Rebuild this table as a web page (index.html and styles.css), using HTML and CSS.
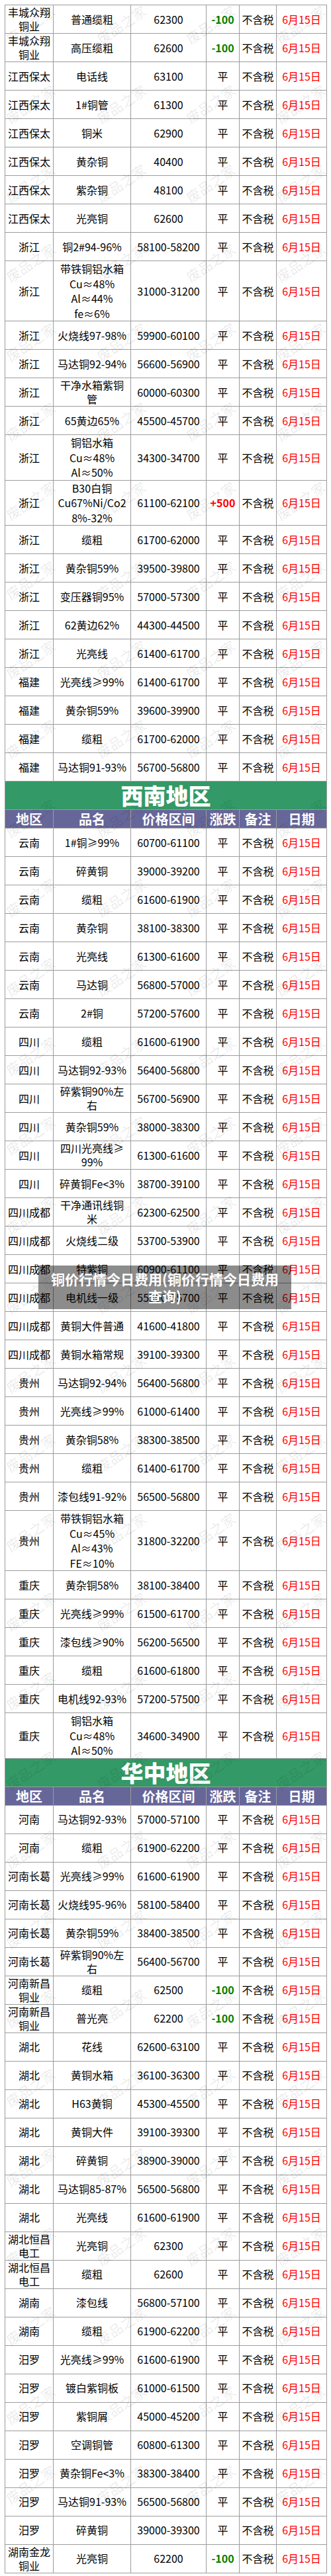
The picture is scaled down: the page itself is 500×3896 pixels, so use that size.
FILE: index.html
```html
<!DOCTYPE html>
<html lang="zh-CN">
<head>
<meta charset="utf-8">
<title>铜价行情今日费用</title>
<link rel="stylesheet" href="styles.css">
</head>
<body>
<div class="page">
<table class="price-table">
<colgroup><col class="c-area"><col class="c-name"><col class="c-price"><col class="c-chg"><col class="c-note"><col class="c-date"></colgroup>
<tbody>
<tr><td class="two">丰城众翔<br>铜业</td><td>普通缆粗</td><td>62300</td><td class="dn">-100</td><td>不含税</td><td class="dt">6月15日</td></tr>
<tr><td class="two">丰城众翔<br>铜业</td><td>高压缆粗</td><td>62600</td><td class="dn">-100</td><td>不含税</td><td class="dt">6月15日</td></tr>
<tr><td>江西保太</td><td>电话线</td><td>63100</td><td>平</td><td>不含税</td><td class="dt">6月15日</td></tr>
<tr><td>江西保太</td><td>1#铜管</td><td>61300</td><td>平</td><td>不含税</td><td class="dt">6月15日</td></tr>
<tr><td>江西保太</td><td>铜米</td><td>62900</td><td>平</td><td>不含税</td><td class="dt">6月15日</td></tr>
<tr><td>江西保太</td><td>黄杂铜</td><td>40400</td><td>平</td><td>不含税</td><td class="dt">6月15日</td></tr>
<tr><td>江西保太</td><td>紫杂铜</td><td>48100</td><td>平</td><td>不含税</td><td class="dt">6月15日</td></tr>
<tr><td>江西保太</td><td>光亮铜</td><td>62600</td><td>平</td><td>不含税</td><td class="dt">6月15日</td></tr>
<tr><td>浙江</td><td>铜2#94-96%</td><td>58100-58200</td><td>平</td><td>不含税</td><td class="dt">6月15日</td></tr>
<tr><td>浙江</td><td>带铁铜铝水箱<br>Cu≈48%<br>Al≈44%<br>fe≈6%</td><td>31000-31200</td><td>平</td><td>不含税</td><td class="dt">6月15日</td></tr>
<tr><td>浙江</td><td>火烧线97-98%</td><td>59900-60100</td><td>平</td><td>不含税</td><td class="dt">6月15日</td></tr>
<tr><td>浙江</td><td>马达铜92-94%</td><td>56600-56900</td><td>平</td><td>不含税</td><td class="dt">6月15日</td></tr>
<tr><td>浙江</td><td class="two">干净水箱紫铜<br>管</td><td>60000-60300</td><td>平</td><td>不含税</td><td class="dt">6月15日</td></tr>
<tr><td>浙江</td><td>65黄边65%</td><td>45500-45700</td><td>平</td><td>不含税</td><td class="dt">6月15日</td></tr>
<tr><td>浙江</td><td>铜铝水箱<br>Cu≈48%<br>Al≈50%</td><td>34300-34700</td><td>平</td><td>不含税</td><td class="dt">6月15日</td></tr>
<tr><td>浙江</td><td>B30白铜<br>Cu67%Ni/Co2<br>8%-32%</td><td>61100-62100</td><td class="up">+500</td><td>不含税</td><td class="dt">6月15日</td></tr>
<tr><td>浙江</td><td>缆粗</td><td>61700-62000</td><td>平</td><td>不含税</td><td class="dt">6月15日</td></tr>
<tr><td>浙江</td><td>黄杂铜59%</td><td>39500-39800</td><td>平</td><td>不含税</td><td class="dt">6月15日</td></tr>
<tr><td>浙江</td><td>变压器铜95%</td><td>57000-57300</td><td>平</td><td>不含税</td><td class="dt">6月15日</td></tr>
<tr><td>浙江</td><td>62黄边62%</td><td>44300-44500</td><td>平</td><td>不含税</td><td class="dt">6月15日</td></tr>
<tr><td>浙江</td><td>光亮线</td><td>61400-61700</td><td>平</td><td>不含税</td><td class="dt">6月15日</td></tr>
<tr><td>福建</td><td>光亮线≥99%</td><td>61400-61700</td><td>平</td><td>不含税</td><td class="dt">6月15日</td></tr>
<tr><td>福建</td><td>黄杂铜59%</td><td>39600-39900</td><td>平</td><td>不含税</td><td class="dt">6月15日</td></tr>
<tr><td>福建</td><td>缆粗</td><td>61700-62000</td><td>平</td><td>不含税</td><td class="dt">6月15日</td></tr>
<tr><td>福建</td><td>马达铜91-93%</td><td>56700-56800</td><td>平</td><td>不含税</td><td class="dt">6月15日</td></tr>

<tr><td class="title" colspan="6">西南地区</td></tr>
<tr class="head"><td>地区</td><td>品名</td><td>价格区间</td><td>涨跌</td><td>备注</td><td>日期</td></tr>
<tr><td>云南</td><td>1#铜≥99%</td><td>60700-61100</td><td>平</td><td>不含税</td><td class="dt">6月15日</td></tr>
<tr><td>云南</td><td>碎黄铜</td><td>39000-39200</td><td>平</td><td>不含税</td><td class="dt">6月15日</td></tr>
<tr><td>云南</td><td>缆粗</td><td>61600-61900</td><td>平</td><td>不含税</td><td class="dt">6月15日</td></tr>
<tr><td>云南</td><td>黄杂铜</td><td>38100-38300</td><td>平</td><td>不含税</td><td class="dt">6月15日</td></tr>
<tr><td>云南</td><td>光亮线</td><td>61300-61600</td><td>平</td><td>不含税</td><td class="dt">6月15日</td></tr>
<tr><td>云南</td><td>马达铜</td><td>56800-57000</td><td>平</td><td>不含税</td><td class="dt">6月15日</td></tr>
<tr><td>云南</td><td>2#铜</td><td>57200-57600</td><td>平</td><td>不含税</td><td class="dt">6月15日</td></tr>
<tr><td>四川</td><td>缆粗</td><td>61600-61900</td><td>平</td><td>不含税</td><td class="dt">6月15日</td></tr>
<tr><td>四川</td><td>马达铜92-93%</td><td>56400-56800</td><td>平</td><td>不含税</td><td class="dt">6月15日</td></tr>
<tr><td>四川</td><td class="two">碎紫铜90%左<br>右</td><td>56700-56900</td><td>平</td><td>不含税</td><td class="dt">6月15日</td></tr>
<tr><td>四川</td><td>黄杂铜59%</td><td>38000-38300</td><td>平</td><td>不含税</td><td class="dt">6月15日</td></tr>
<tr><td>四川</td><td class="two">四川光亮线≥<br>99%</td><td>61300-61600</td><td>平</td><td>不含税</td><td class="dt">6月15日</td></tr>
<tr><td>四川</td><td>碎黄铜Fe&lt;3%</td><td>38700-39100</td><td>平</td><td>不含税</td><td class="dt">6月15日</td></tr>
<tr><td>四川成都</td><td class="two">干净通讯线铜<br>米</td><td>62300-62500</td><td>平</td><td>不含税</td><td class="dt">6月15日</td></tr>
<tr><td>四川成都</td><td>火烧线二级</td><td>53700-53900</td><td>平</td><td>不含税</td><td class="dt">6月15日</td></tr>
<tr><td>四川成都</td><td>特紫铜</td><td>60900-61100</td><td>平</td><td>不含税</td><td class="dt">6月15日</td></tr>
<tr><td>四川成都</td><td>电机线一级</td><td>55500-55700</td><td>平</td><td>不含税</td><td class="dt">6月15日</td></tr>
<tr><td>四川成都</td><td>黄铜大件普通</td><td>41600-41800</td><td>平</td><td>不含税</td><td class="dt">6月15日</td></tr>
<tr><td>四川成都</td><td>黄铜水箱常规</td><td>39100-39300</td><td>平</td><td>不含税</td><td class="dt">6月15日</td></tr>
<tr><td>贵州</td><td>马达铜92-94%</td><td>56400-56800</td><td>平</td><td>不含税</td><td class="dt">6月15日</td></tr>
<tr><td>贵州</td><td>光亮线≥99%</td><td>61000-61400</td><td>平</td><td>不含税</td><td class="dt">6月15日</td></tr>
<tr><td>贵州</td><td>黄杂铜58%</td><td>38300-38500</td><td>平</td><td>不含税</td><td class="dt">6月15日</td></tr>
<tr><td>贵州</td><td>缆粗</td><td>61400-61700</td><td>平</td><td>不含税</td><td class="dt">6月15日</td></tr>
<tr><td>贵州</td><td>漆包线91-92%</td><td>56500-56800</td><td>平</td><td>不含税</td><td class="dt">6月15日</td></tr>
<tr><td>贵州</td><td>带铁铜铝水箱<br>Cu≈45%<br>Al≈43%<br>FE≈10%</td><td>31800-32200</td><td>平</td><td>不含税</td><td class="dt">6月15日</td></tr>
<tr><td>重庆</td><td>黄杂铜58%</td><td>38100-38400</td><td>平</td><td>不含税</td><td class="dt">6月15日</td></tr>
<tr><td>重庆</td><td>光亮线≥99%</td><td>61500-61700</td><td>平</td><td>不含税</td><td class="dt">6月15日</td></tr>
<tr><td>重庆</td><td>漆包线≥90%</td><td>56200-56500</td><td>平</td><td>不含税</td><td class="dt">6月15日</td></tr>
<tr><td>重庆</td><td>缆粗</td><td>61600-61800</td><td>平</td><td>不含税</td><td class="dt">6月15日</td></tr>
<tr><td>重庆</td><td>电机线92-93%</td><td>57200-57500</td><td>平</td><td>不含税</td><td class="dt">6月15日</td></tr>
<tr><td>重庆</td><td>铜铝水箱<br>Cu≈48%<br>Al≈50%</td><td>34600-34900</td><td>平</td><td>不含税</td><td class="dt">6月15日</td></tr>

<tr><td class="title" colspan="6">华中地区</td></tr>
<tr class="head"><td>地区</td><td>品名</td><td>价格区间</td><td>涨跌</td><td>备注</td><td>日期</td></tr>
<tr><td>河南</td><td>马达铜92-93%</td><td>57000-57100</td><td>平</td><td>不含税</td><td class="dt">6月15日</td></tr>
<tr><td>河南</td><td>缆粗</td><td>61900-62200</td><td>平</td><td>不含税</td><td class="dt">6月15日</td></tr>
<tr><td>河南长葛</td><td>光亮线≥99%</td><td>61600-61900</td><td>平</td><td>不含税</td><td class="dt">6月15日</td></tr>
<tr><td>河南长葛</td><td>火烧线95-96%</td><td>58100-58400</td><td>平</td><td>不含税</td><td class="dt">6月15日</td></tr>
<tr><td>河南长葛</td><td>黄杂铜59%</td><td>38400-38500</td><td>平</td><td>不含税</td><td class="dt">6月15日</td></tr>
<tr><td>河南长葛</td><td class="two">碎紫铜90%左<br>右</td><td>56400-56700</td><td>平</td><td>不含税</td><td class="dt">6月15日</td></tr>
<tr><td class="two">河南新昌<br>铜业</td><td>缆粗</td><td>62500</td><td class="dn">-100</td><td>不含税</td><td class="dt">6月15日</td></tr>
<tr><td class="two">河南新昌<br>铜业</td><td>普光亮</td><td>62200</td><td class="dn">-100</td><td>不含税</td><td class="dt">6月15日</td></tr>
<tr><td>湖北</td><td>花线</td><td>62600-63100</td><td>平</td><td>不含税</td><td class="dt">6月15日</td></tr>
<tr><td>湖北</td><td>黄铜水箱</td><td>36100-36300</td><td>平</td><td>不含税</td><td class="dt">6月15日</td></tr>
<tr><td>湖北</td><td>H63黄铜</td><td>45300-45500</td><td>平</td><td>不含税</td><td class="dt">6月15日</td></tr>
<tr><td>湖北</td><td>黄铜大件</td><td>39100-39300</td><td>平</td><td>不含税</td><td class="dt">6月15日</td></tr>
<tr><td>湖北</td><td>碎黄铜</td><td>38900-39000</td><td>平</td><td>不含税</td><td class="dt">6月15日</td></tr>
<tr><td>湖北</td><td>马达铜85-87%</td><td>56500-56800</td><td>平</td><td>不含税</td><td class="dt">6月15日</td></tr>
<tr><td>湖北</td><td>光亮线</td><td>61600-61900</td><td>平</td><td>不含税</td><td class="dt">6月15日</td></tr>
<tr><td class="two">湖北恒昌<br>电工</td><td>光亮铜</td><td>62300</td><td>平</td><td>不含税</td><td class="dt">6月15日</td></tr>
<tr><td class="two">湖北恒昌<br>电工</td><td>缆粗</td><td>62600</td><td>平</td><td>不含税</td><td class="dt">6月15日</td></tr>
<tr><td>湖南</td><td>漆包线</td><td>56800-57100</td><td>平</td><td>不含税</td><td class="dt">6月15日</td></tr>
<tr><td>湖南</td><td>缆粗</td><td>61900-62200</td><td>平</td><td>不含税</td><td class="dt">6月15日</td></tr>
<tr><td>汨罗</td><td>光亮线≥99%</td><td>61600-61900</td><td>平</td><td>不含税</td><td class="dt">6月15日</td></tr>
<tr><td>汨罗</td><td>镀白紫铜板</td><td>61000-61500</td><td>平</td><td>不含税</td><td class="dt">6月15日</td></tr>
<tr><td>汨罗</td><td>紫铜屑</td><td>45000-45200</td><td>平</td><td>不含税</td><td class="dt">6月15日</td></tr>
<tr><td>汨罗</td><td>空调铜管</td><td>60800-61300</td><td>平</td><td>不含税</td><td class="dt">6月15日</td></tr>
<tr><td>汨罗</td><td>黄杂铜Fe&lt;3%</td><td>38300-38400</td><td>平</td><td>不含税</td><td class="dt">6月15日</td></tr>
<tr><td>汨罗</td><td>马达铜91-93%</td><td>56500-56800</td><td>平</td><td>不含税</td><td class="dt">6月15日</td></tr>
<tr><td>汨罗</td><td>碎黄铜</td><td>39000-39300</td><td>平</td><td>不含税</td><td class="dt">6月15日</td></tr>
<tr><td class="two">湖南金龙<br>铜业</td><td>光亮铜</td><td>62200</td><td class="dn">-100</td><td>不含税</td><td class="dt">6月15日</td></tr>
</tbody>
</table>

<div class="watermarks" aria-hidden="true">
<span>废品之家</span><span>废品之家</span><span>废品之家</span><span>废品之家</span>
<span>废品之家</span><span>废品之家</span><span>废品之家</span><span>废品之家</span>
<span>废品之家</span><span>废品之家</span><span>废品之家</span><span>废品之家</span>
<span>废品之家</span><span>废品之家</span><span>废品之家</span><span>废品之家</span>
<span>废品之家</span><span>废品之家</span><span>废品之家</span><span>废品之家</span>
<span>废品之家</span><span>废品之家</span><span>废品之家</span><span>废品之家</span>
<span>废品之家</span><span>废品之家</span><span>废品之家</span><span>废品之家</span>
<span>废品之家</span><span>废品之家</span><span>废品之家</span><span>废品之家</span>
<span>废品之家</span><span>废品之家</span><span>废品之家</span><span>废品之家</span>
<span>废品之家</span><span>废品之家</span><span>废品之家</span><span>废品之家</span>
<span>废品之家</span><span>废品之家</span><span>废品之家</span><span>废品之家</span>
<span>废品之家</span><span>废品之家</span><span>废品之家</span><span>废品之家</span>
<span>废品之家</span><span>废品之家</span><span>废品之家</span><span>废品之家</span>
<span>废品之家</span><span>废品之家</span><span>废品之家</span><span>废品之家</span>
<span>废品之家</span><span>废品之家</span><span>废品之家</span><span>废品之家</span>
<span>废品之家</span><span>废品之家</span><span>废品之家</span><span>废品之家</span>
<span>废品之家</span><span>废品之家</span><span>废品之家</span><span>废品之家</span>
<span>废品之家</span><span>废品之家</span><span>废品之家</span><span>废品之家</span>
<span>废品之家</span><span>废品之家</span><span>废品之家</span><span>废品之家</span>
<span>废品之家</span><span>废品之家</span><span>废品之家</span><span>废品之家</span>
<span>废品之家</span><span>废品之家</span><span>废品之家</span><span>废品之家</span>
<span>废品之家</span><span>废品之家</span><span>废品之家</span><span>废品之家</span>
<span>废品之家</span><span>废品之家</span><span>废品之家</span><span>废品之家</span>
<span>废品之家</span><span>废品之家</span><span>废品之家</span><span>废品之家</span>
<span>废品之家</span><span>废品之家</span><span>废品之家</span><span>废品之家</span>
<span>废品之家</span><span>废品之家</span><span>废品之家</span><span>废品之家</span>
<span>废品之家</span><span>废品之家</span><span>废品之家</span><span>废品之家</span>
<span>废品之家</span><span>废品之家</span><span>废品之家</span><span>废品之家</span>
<span>废品之家</span><span>废品之家</span><span>废品之家</span><span>废品之家</span>
<span>废品之家</span><span>废品之家</span><span>废品之家</span><span>废品之家</span>
<span>废品之家</span><span>废品之家</span><span>废品之家</span><span>废品之家</span>
<span>废品之家</span><span>废品之家</span><span>废品之家</span><span>废品之家</span>
</div>

<div class="banner">铜价行情今日费用(铜价行情今日费用查询)</div>
</div>
</body>
</html>
```

FILE: styles.css
```css
html, body {
  margin: 0;
  padding: 0;
  background: #ffffff;
}

body {
  font-family: "Noto Sans CJK SC", "Noto Sans", sans-serif;
  color: #000000;
}

.page {
  position: relative;
  width: 500px;
  height: 3896px;
  padding: 7px 7px 0 7px;
  box-sizing: border-box;
  overflow: hidden;
}

.price-table {
  width: 486px;
  border-collapse: collapse;
  table-layout: fixed;
  font-size: 16px;
}

.c-area { width: 73px; }
.c-name { width: 117px; }
.c-price { width: 114px; }
.c-chg { width: 50px; }
.c-note { width: 56px; }
.c-date { width: 76px; }

.price-table td {
  border: 1px solid #9c9c9c;
  height: 42px;
  padding: 0;
  text-align: center;
  vertical-align: middle;
  line-height: 22.5px;
  white-space: nowrap;
}

.price-table td.two {
  line-height: 21px;
}

.price-table td.dt {
  color: #ff0000;
}

.price-table td.dn {
  color: #008000;
  font-weight: 700;
}

.price-table td.up {
  color: #ff0000;
  font-weight: 700;
}

.price-table td.title {
  height: 42px;
  background: #339966;
  color: #ffffff;
  font-size: 34px;
  font-weight: 900;
  line-height: 42px;
}

.price-table tr.head td {
  height: 27px;
  background: #666699;
  color: #ffffff;
  font-size: 20px;
  font-weight: 700;
  line-height: 27px;
}

.watermarks {
  position: absolute;
  top: 0;
  left: 0;
  width: 500px;
  pointer-events: none;
  display: grid;
  grid-template-columns: repeat(4, 125px);
  grid-auto-rows: 120px;
}

.watermarks span {
  justify-self: center;
  align-self: center;
  font-size: 21px;
  line-height: 24px;
  color: rgba(0, 0, 0, 0.09);
  white-space: nowrap;
}

.watermarks span:nth-child(4n+1) { transform: translate(-17px, -23px) rotate(-34deg); }
.watermarks span:nth-child(4n+2) { transform: translate(-5px, -23px) rotate(-34deg); }
.watermarks span:nth-child(4n+3) { transform: translate(5px, -23px) rotate(-34deg); }
.watermarks span:nth-child(4n+4) { transform: translate(16px, -23px) rotate(-34deg); }

.banner {
  position: absolute;
  left: 58px;
  top: 1914px;
  width: 382px;
  padding: 7px 12px;
  box-sizing: border-box;
  background: rgba(0, 0, 0, 0.45);
  color: #ffffff;
  font-size: 21px;
  font-weight: 700;
  line-height: 26px;
  text-align: center;
}
```
